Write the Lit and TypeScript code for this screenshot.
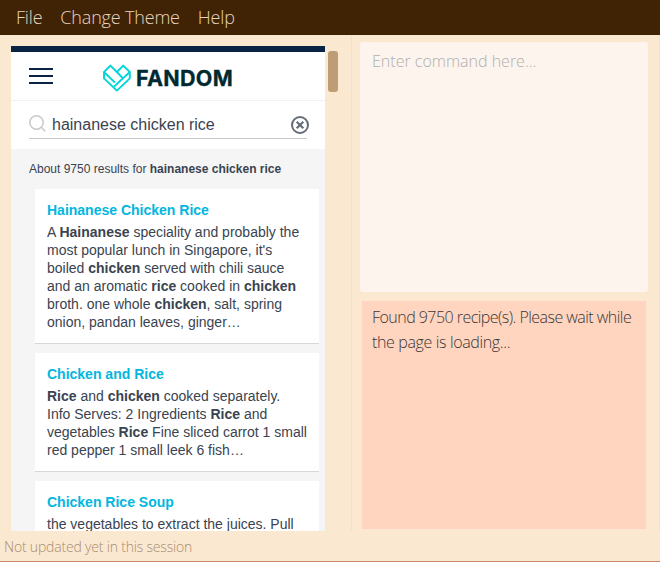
import { LitElement, html, css } from "lit";
import { customElement, property } from "lit/decorators.js";

type Part = string | { b: string };
interface Recipe {
  title: string;
  lines: Part[][];
}

const b = (text: string) => ({ b: text });

const RECIPES: Recipe[] = [
  {
    title: "Hainanese Chicken Rice",
    lines: [
      ["A ", b("Hainanese"), " speciality and probably the"],
      ["most popular lunch in Singapore, it's"],
      ["boiled ", b("chicken"), " served with chili sauce"],
      ["and an aromatic ", b("rice"), " cooked in ", b("chicken")],
      ["broth. one whole ", b("chicken"), ", salt, spring"],
      ["onion, pandan leaves, ginger…"],
    ],
  },
  {
    title: "Chicken and Rice",
    lines: [
      [b("Rice"), " and ", b("chicken"), " cooked separately."],
      ["Info Serves: 2 Ingredients ", b("Rice"), " and"],
      ["vegetables ", b("Rice"), " Fine sliced carrot 1 small"],
      ["red pepper 1 small leek 6 fish…"],
    ],
  },
  {
    title: "Chicken Rice Soup",
    lines: [["the vegetables to extract the juices. Pull"]],
  },
];

@customElement("recipe-card")
export class RecipeCard extends LitElement {
  @property({ attribute: false }) recipe!: Recipe;

  static styles = css`
    :host {
      display: block;
      box-sizing: border-box;
      background: #fff;
      border-bottom: 1px solid #d8d8d8;
      padding: 12px 0 12px 12px;
    }
    .title {
      font-weight: bold;
      color: #00b7e0;
      line-height: 18px;
      margin-bottom: 4px;
    }
    .line {
      line-height: 18px;
      white-space: pre;
    }
  `;

  render() {
    return html`<div class="title">${this.recipe.title}</div>
      ${this.recipe.lines.map(
        (line) =>
          html`<div class="line">${line.map((p) => (typeof p === "string" ? p : html`<b>${p.b}</b>`))}</div>`
      )}`;
  }
}

@customElement("recipe-browser")
export class RecipeBrowser extends LitElement {
  static styles = css`
    :host {
      display: flex;
      flex-direction: column;
      box-sizing: border-box;
      width: 314px;
      height: 485px;
      overflow: hidden;
      background: #f5f5f5;
      border-top: 6px solid #092344;
      font-family: "Liberation Sans", Arial, sans-serif;
      font-size: 14px;
      font-weight: 400;
      color: #3a4350;
    }
    .header {
      flex: none;
      display: flex;
      height: 48px;
      background: #fff;
      border-bottom: 1px solid #f2f2f2;
    }
    .menu {
      margin: 16px 0 0 18px;
      width: 24px;
      height: 16px;
    }
    .logo {
      margin: 11px 0 0 49px;
      width: 29px;
      height: 30px;
    }
    .brand {
      margin: 11px 0 0 5px;
      font: 700 21.5px/30px Inter, sans-serif;
      letter-spacing: 0.3px;
      color: #002a32;
      -webkit-text-stroke: 0.3px #002a32;
    }
    .search {
      flex: none;
      height: 48px;
      background: #fff;
      padding: 0 16px 0 18px;
      box-sizing: border-box;
    }
    .field {
      display: flex;
      align-items: center;
      height: 37px;
      width: 278px;
      border-bottom: 1px solid #c8c8c8;
      font-size: 16px;
    }
    .glass {
      width: 17px;
      height: 18px;
      margin: 9px 6px 0 0;
    }
    .query {
      flex: 1;
      padding-top: 11px;
    }
    .clear {
      width: 18px;
      height: 18px;
      margin: 10px -2px 0 0;
    }
    .count {
      flex: none;
      font-size: 12px;
      line-height: 16px;
      padding: 12px 0 12px 18px;
    }
    .cards {
      display: flex;
      flex-direction: column;
      gap: 9px;
      padding: 0 6px 0 24px;
    }
  `;

  render() {
    return html`
      <div class="header">
        <svg class="menu" viewBox="0 0 24 16" fill="#092344">
          <path d="M0 0h24v2H0zM0 7h24v2H0zM0 14h24v2H0z" />
        </svg>
        <svg class="logo" viewBox="0 0 29 30" fill="none" stroke="#00d6d6" stroke-width="1.9" stroke-linejoin="round">
          <path d="M2 9 8.4 2.6 14.9 9l6.3-6.4L27.8 9v6.4L14.9 27.6 2 15.4z" />
          <path d="M2 9l11 10.6M27.8 9 12 23.6M14.9 9l5.8 6.2" />
        </svg>
        <span class="brand">FANDOM</span>
      </div>
      <div class="search">
        <div class="field">
          <svg class="glass" viewBox="0 0 17 18" fill="none" stroke="#c8c8c8" stroke-width="1.5">
            <circle cx="7.5" cy="7.5" r="6.7" />
            <path d="m12.3 12.3 4 4" />
          </svg>
          <span class="query">hainanese chicken rice</span>
          <svg class="clear" viewBox="0 0 18 18" fill="none" stroke="#656e78" stroke-width="2">
            <circle cx="9" cy="9" r="8" />
            <path d="m5.7 5.7 6.6 6.6m0-6.6-6.6 6.6" stroke-width="2.2" />
          </svg>
        </div>
      </div>
      <div class="count">About 9750 results for <b>hainanese chicken rice</b></div>
      <div class="cards">${RECIPES.map((r) => html`<recipe-card .recipe=${r}></recipe-card>`)}</div>
    `;
  }
}

@customElement("app-root")
export class AppRoot extends LitElement {
  static styles = css`
    :host {
      display: flex;
      flex-direction: column;
      box-sizing: border-box;
      width: 660px;
      height: 562px;
      overflow: hidden;
      background: #fbe8d0;
      border-bottom: 1px solid #c9866a;
      font-family: "Open Sans", "Noto Sans", sans-serif;
      font-weight: 300;
    }
    .menubar {
      flex: none;
      display: flex;
      gap: 18px;
      height: 35px;
      padding-left: 16px;
      background: #402305;
      color: #e6d5c1;
      font-size: 18px;
      line-height: 35px;
      letter-spacing: -0.18px;
      white-space: nowrap;
    }
    .main {
      flex: none;
      display: flex;
      height: 496px;
      box-sizing: border-box;
      border-right: 1px solid #fddcc6;
    }
    .left {
      display: flex;
      box-sizing: border-box;
      width: 352px;
      padding: 11px 0 0 11px;
      border-right: 1px solid #fddcc6;
    }
    .thumb {
      width: 10px;
      height: 41px;
      margin: 5px 0 0 3px;
      border-radius: 3px;
      background: #be9c76;
    }
    .right {
      padding: 7px 0 0 8px;
      width: 288px;
    }
    .command {
      box-sizing: border-box;
      height: 250px;
      padding: 7px 12px;
      border-radius: 3px;
      background: #fdf4ed;
      color: #b0b0b0;
      font-size: 16px;
      line-height: 25px;
    }
    .result {
      box-sizing: border-box;
      height: 228px;
      margin: 9px 2px 0;
      padding: 4px 0 0 10px;
      background: #ffd5c0;
      color: #3c3634;
      font-size: 16px;
      line-height: 25px;
      letter-spacing: -0.36px;
      white-space: nowrap;
    }
    .tight {
      letter-spacing: -0.54px;
    }
    .status {
      flex: none;
      padding-left: 4px;
      font-size: 14px;
      line-height: 31px;
      height: 30px;
      letter-spacing: -0.19px;
      color: #a68e72;
    }
  `;

  render() {
    return html`
      <div class="menubar"><span>File</span><span>Change Theme</span><span>Help</span></div>
      <div class="main">
        <div class="left">
          <recipe-browser></recipe-browser>
          <div class="thumb"></div>
        </div>
        <div class="right">
          <div class="command">Enter command here...</div>
          <div class="result">
            <div class="tight">Found 9750 recipe(s). Please wait while</div>
            <div>the page is loading...</div>
          </div>
        </div>
      </div>
      <div class="status">Not updated yet in this session</div>
    `;
  }
}
